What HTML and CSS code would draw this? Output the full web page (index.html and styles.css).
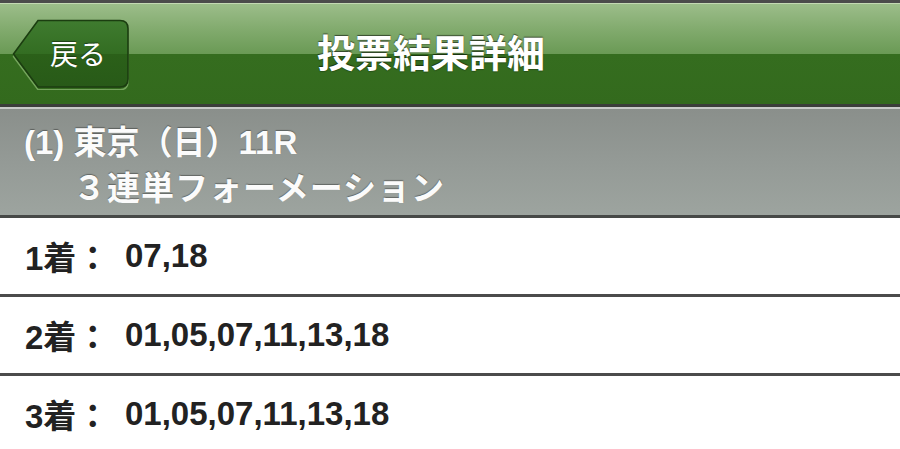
FILE: index.html
```html
<!DOCTYPE html>
<html lang="ja">
<head>
<meta charset="utf-8">
<title>投票結果詳細</title>
<link rel="stylesheet" href="styles.css">
</head>
<body>
<div class="top-edge"></div>
<header class="navbar">
  <a class="back" href="#">
    <svg class="back-shape" viewBox="0 0 118 71" width="118" height="71" aria-hidden="true">
      <defs>
        <linearGradient id="bg" x1="0" y1="0" x2="0" y2="1">
          <stop offset="0" stop-color="#3f7b2f"/>
          <stop offset="0.5" stop-color="#336d22"/>
          <stop offset="0.5" stop-color="#2b6019"/>
          <stop offset="1" stop-color="#285a18"/>
        </linearGradient>
      </defs>
      <path d="M1.5 36.5 L26 3 H108 Q116 3 116 11 V61 Q116 69.5 108 69.5 H26 Z" fill="none" stroke="#74a45c" stroke-width="1.5" transform="translate(0 1.2)"/>
      <path d="M1.5 35 L26 1.5 H108 Q116 1.5 116 9.5 V60 Q116 68 108 68 H26 Z" fill="url(#bg)" stroke="#1b3d10" stroke-width="1.6"/>
    </svg>
    <span class="back-label">戻る</span>
  </a>
  <h1 class="title">投票結果詳細</h1>
</header>
<section class="race">
  <div class="race-line1">(1) 東京（日）11R</div>
  <div class="race-line2">３連単フォーメーション</div>
</section>
<ul class="rows">
  <li class="row"><span class="label">1<span class="jp">着：</span></span><span class="nums">07,18</span></li>
  <li class="row"><span class="label">2<span class="jp">着：</span></span><span class="nums">01,05,07,11,13,18</span></li>
  <li class="row"><span class="label">3<span class="jp">着：</span></span><span class="nums">01,05,07,11,13,18</span></li>
</ul>
</body>
</html>
```
FILE: styles.css
```css
html, body {
  margin: 0;
  padding: 0;
  background: #ffffff;
  width: 900px;
  height: 449px;
  overflow: hidden;
  font-family: "Liberation Sans", "Noto Sans CJK JP", sans-serif;
}

.jp {
  font-family: "Noto Sans CJK JP", sans-serif;
}

.top-edge {
  height: 3px;
  background: #4b4b4b;
}

.navbar {
  display: flex;
  align-items: center;
  height: 100px;
  border-top: 1px solid #c3d9b3;
  border-bottom: 3px solid #3b3d3a;
  background: linear-gradient(to bottom, #9cbd8a 0%, #82ab6e 25%, #6a9a55 50%, #356d1f 50%, #336a1d 100%);
  box-sizing: content-box;
}

.back {
  position: relative;
  display: flex;
  align-items: center;
  justify-content: center;
  width: 118px;
  height: 71px;
  margin-left: 12px;
  padding-left: 14px;
  box-sizing: border-box;
  text-decoration: none;
}

.back-shape {
  position: absolute;
  left: 0;
  top: 0;
}

.back-label {
  position: relative;
  font-family: "Noto Sans CJK JP", sans-serif;
  font-size: 28px;
  line-height: 1;
  color: #ffffff;
  text-shadow: 0 -1px 1px rgba(0, 0, 0, 0.45);
  margin-top: -3px;
}

.title {
  margin: 0 0 6px 187px;
  font-family: "Noto Sans CJK JP", sans-serif;
  font-size: 38px;
  font-weight: 700;
  line-height: 1;
  color: #ffffff;
  text-shadow: 0 -1px 1px rgba(0, 0, 0, 0.55), 0 1px 1px rgba(0, 0, 0, 0.25);
}

.race {
  border-top: 2px solid #c8cbc8;
  border-bottom: 3px solid #474947;
  background: linear-gradient(to bottom, #8a8f8b 0%, #949a96 50%, #9da49f 100%);
  padding-top: 15px;
  box-sizing: content-box;
  height: 91px;
  color: #fbfbfb;
  font-weight: 700;
  text-shadow: 0 -1px 1px rgba(0, 0, 0, 0.35);
}

.race-line1 {
  padding-left: 24px;
  font-size: 33px;
  line-height: 38px;
}

.race-line2 {
  padding-left: 73px;
  font-family: "Noto Sans CJK JP", sans-serif;
  font-size: 33px;
  letter-spacing: 1px;
  line-height: 48px;
}

.rows {
  list-style: none;
  margin: 0;
  padding: 0;
}

.row {
  display: flex;
  align-items: center;
  height: 76px;
  padding-left: 25px;
  border-bottom: 3px solid #4b4b4b;
  font-size: 33px;
  font-weight: 700;
  color: #222222;
}

.label {
  width: 100px;
  flex: none;
}
```
